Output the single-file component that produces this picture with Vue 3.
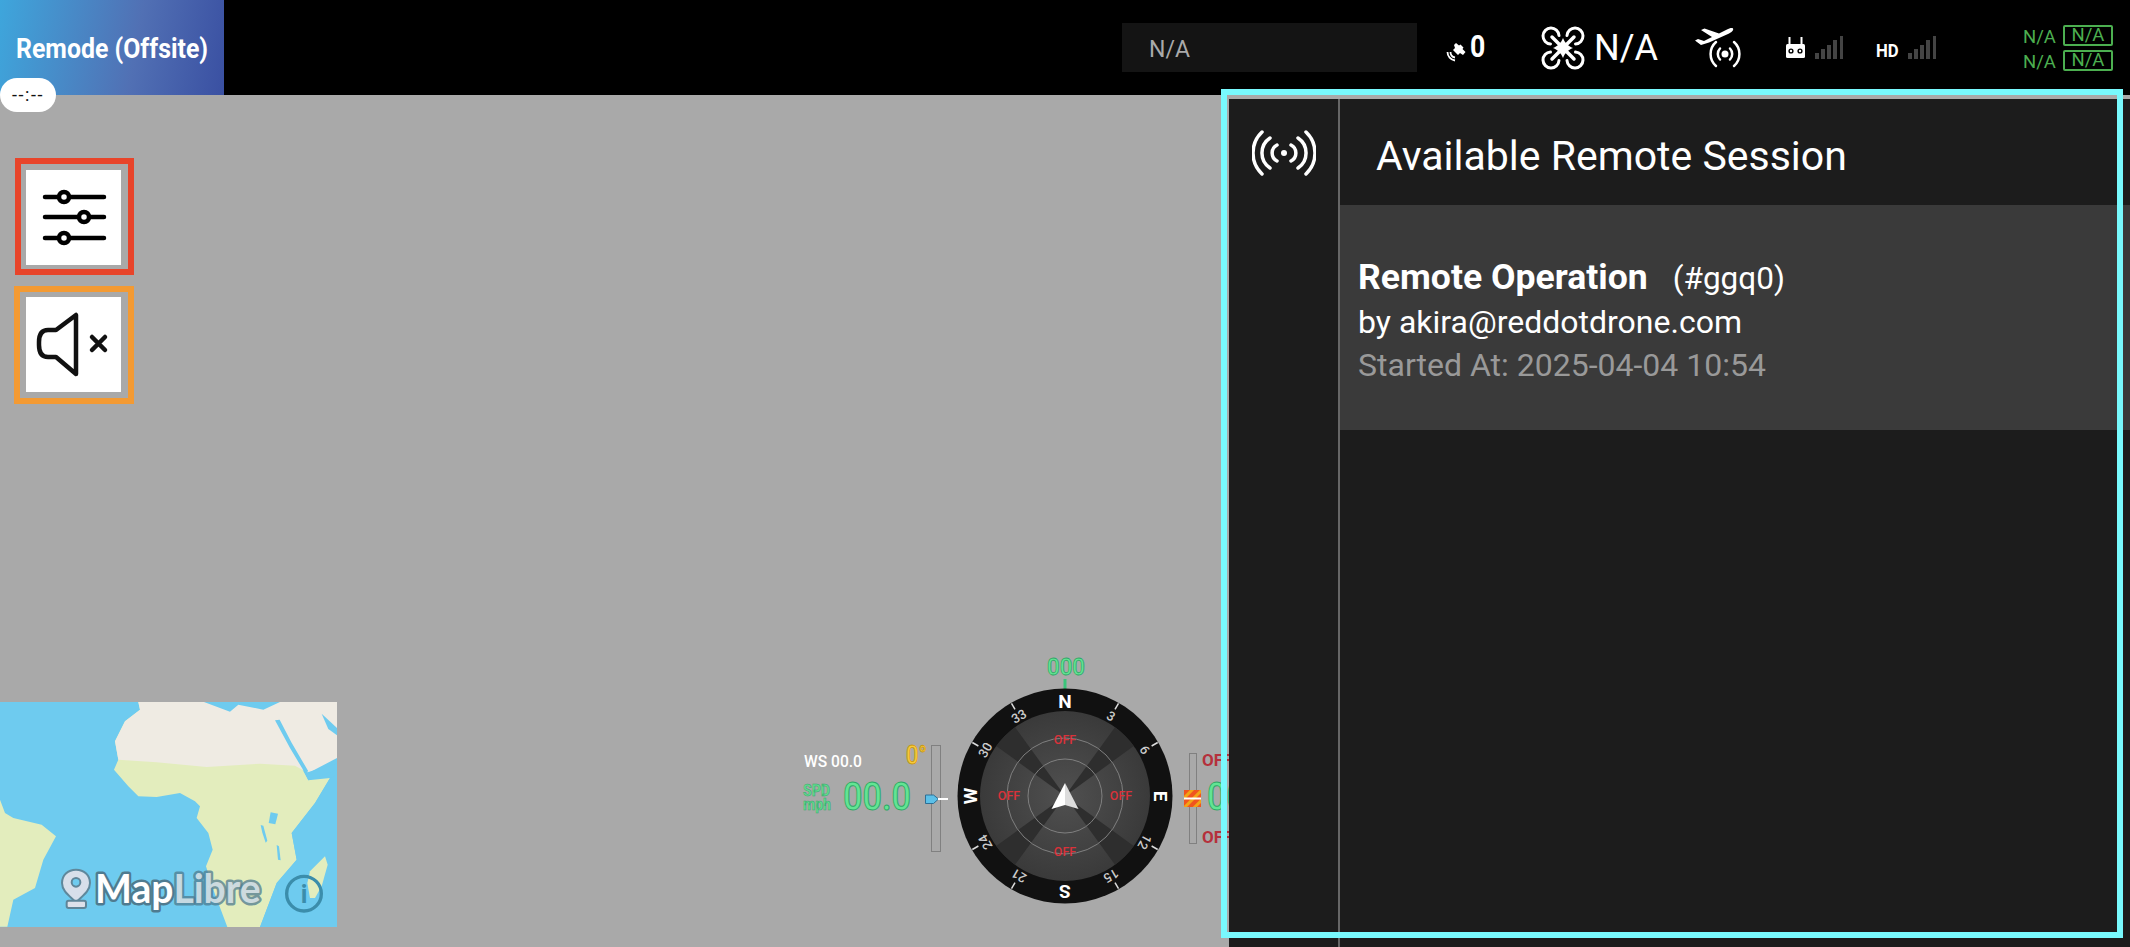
<script setup>
const cx = 1065
const cy = 796
const rad = (d) => ((d - 90) * Math.PI) / 180
const pt = (d, r) => ({ x: cx + Math.cos(rad(d)) * r, y: cy + Math.sin(rad(d)) * r })
const numbers = [30, 60, 120, 150, 210, 240, 300, 330].map((d) => {
  const a = pt(d, 107)
  const b = pt(d, 100)
  const t = pt(d, 92)
  return { d, label: String(d / 10), x1: a.x, y1: a.y, x2: b.x, y2: b.y, tx: t.x, ty: t.y }
})
const cardinals = [
  { d: 0, label: 'N' },
  { d: 90, label: 'E' },
  { d: 180, label: 'S' },
  { d: 270, label: 'W' }
].map((c) => ({ ...c, ...pt(c.d, 95) }))
const wedge = (d, w, r) => {
  const a = pt(d - w, r)
  const b = pt(d + w, r)
  return `M${cx} ${cy} L${a.x} ${a.y} A${r} ${r} 0 0 1 ${b.x} ${b.y} Z`
}
const wedges = [45, 135, 225, 315].map((d) => wedge(d, 9, 85))
const offs = [
  { x: 1065, y: 744 },
  { x: 1065, y: 856 },
  { x: 1121, y: 800 },
  { x: 1009, y: 800 }
]
const bars = [0, 1, 2, 3, 4]
</script>

<template>
  <div class="screen">
    <header class="topbar">
      <div class="brand"><span>Remode (Offsite)</span></div>
      <div class="status-box">N/A</div>
      <div class="sat">
        <svg width="20" height="20" viewBox="0 0 20 20">
          <path d="M10 1l3 2.500 1.500-1 3 3-1 1.500 3 3-2.500 3-3-2-2 2-5-5 2-2-1-3z" fill="#fff" />
          <path d="M1.500 10a8.500 8.500 0 0 0 7.500 8.500M4.500 10a5.500 5.500 0 0 0 4.500 5.500" fill="none" stroke="#fff" stroke-width="1.800" />
        </svg>
        <span>0</span>
      </div>
      <div class="drone">
        <svg width="44" height="44" viewBox="0 0 44 44" fill="none" stroke="#fff" stroke-width="3" stroke-linecap="round">
          <path d="M18 9.500A8 8 0 1 0 9.500 18M26 9.500A8 8 0 1 1 34.500 18M18 34.500A8 8 0 1 1 9.500 26M26 34.500A8 8 0 1 0 34.500 26" />
          <path d="M11 11l22 22M33 11L11 33" stroke-width="3.500" />
          <path d="M22 12c2 5 5 8 10 10-5 2-8 5-10 10-2-5-5-8-10-10 5-2 8-5 10-10z" fill="#fff" stroke="none" />
        </svg>
        <span>N/A</span>
      </div>
      <svg class="plane" width="48" height="41" viewBox="0 0 48 41">
        <path d="M38 1.500c1 2-2 4-5 5.500L14 15.500 6 18 0 13.500 3 12l6 2 8-4L6 3l3.500-1.500L24 6.500l8-4c2-1 5-2 6-1z" fill="#fff" />
        <circle cx="30" cy="27" r="3.500" fill="#fff" />
        <path d="M25 21.500a8 8 0 0 0 0 11M35 21.500a8 8 0 0 1 0 11M21 15a16 16 0 0 0 0 24M39 15a16 16 0 0 1 0 24" fill="none" stroke="#fff" stroke-width="2.500" stroke-linecap="round" />
      </svg>
      <svg class="rc" width="19" height="21" viewBox="0 0 19 21">
        <path d="M3.500 0v7M15.500 0v7" stroke="#fff" stroke-width="2" />
        <rect x="0" y="7" width="19" height="14" rx="1.500" fill="#fff" />
        <circle cx="5" cy="14" r="2.600" fill="#000" />
        <circle cx="14" cy="14" r="2.600" fill="#000" />
        <circle cx="5" cy="14" r="1.200" fill="#fff" />
        <circle cx="14" cy="14" r="1.200" fill="#fff" />
      </svg>
      <div class="bars">
        <i v-for="b in bars" :key="b" :style="{ height: 6 + b * 4.200 + 'px' }"></i>
      </div>
      <span class="hd">HD</span>
      <div class="bars bars-hd">
        <i v-for="b in bars" :key="b" :style="{ height: 6 + b * 4.200 + 'px' }"></i>
      </div>
      <div class="readouts">
        <div class="readout"><span>N/A</span><b>N/A</b></div>
        <div class="readout"><span>N/A</span><b>N/A</b></div>
      </div>
    </header>

    <div class="time-pill">--:--</div>

    <main class="body">
      <section class="mapview">
        <div class="tools">
          <div class="tool tool-red">
            <button class="tool-btn" aria-label="Settings">
              <svg width="95" height="95" viewBox="0 0 95 95" fill="none" stroke="#000" stroke-width="4.500" stroke-linecap="round">
                <path d="M19 27h59M19 47h59M19 68h59" />
                <circle cx="38" cy="27" r="5" fill="#fff" />
                <circle cx="58" cy="47" r="5" fill="#fff" />
                <circle cx="38" cy="68" r="5" fill="#fff" />
              </svg>
            </button>
          </div>
          <div class="tool tool-orange">
            <button class="tool-btn" aria-label="Muted">
              <svg width="95" height="95" viewBox="0 0 95 95" fill="none" stroke="#111" stroke-linecap="round" stroke-linejoin="round">
                <path d="M50 18v59L30 60H22q-9 0-9-12v-3q0-12 9-12h8z" stroke-width="4.500" />
                <path d="M66 40l13 13M79 40L66 53" stroke-width="4.500" />
              </svg>
            </button>
          </div>
        </div>

        <svg class="minimap" width="337" height="225" viewBox="0 37 1011 675">
          <rect x="0" y="37" width="1011" height="675" fill="#6ecbef" />
          <path d="M0 330L15 370 40 385 125 405 168 440 130 510 105 595 40 630 22 711H0z" fill="#e3edbd" />
          <path d="M415 37L420 60 375 95 345 155 355 210 342 240 385 290 415 320 470 322 540 310 585 335 600 350 590 385 625 430 638 480 618 530 640 600 682 712H780L830 580 890 510 875 430 945 340 990 265 925 272 905 235 885 225 825 90 850 37z" fill="#e3edbd" />
          <path d="M415 37L420 60 375 95 345 155 355 210 470 218 620 232 780 222 885 228 925 250 1011 205V37z" fill="#efebe3" />
          <path d="M612 37L690 66 715 45 790 60 840 37z" fill="#6ecbef" />
          <path d="M965 72L1011 115V137L985 118z" fill="#6ecbef" />
          <path d="M825 92L839 90 874 158 925 245 915 250 870 175z" fill="#6ecbef" />
          <path d="M915 250L1011 222V240L925 272z" fill="#6ecbef" />
          <path d="M990 265L1011 255V712H780L830 580 890 510 875 430 945 340z" fill="#6ecbef" />
          <path d="M812 368L834 372 826 404 806 400z" fill="#6ecbef" />
          <path d="M782 406L790 408 802 453 797 459 787 429z" fill="#6ecbef" />
          <path d="M830 466L837 470 842 512 834 510z" fill="#6ecbef" />
          <path d="M975 500L983 525 965 590 945 625 930 625 922 580 930 545z" fill="#e3edbd" />
          <path d="M228 540c-25 0-42 18-42 40 0 25 25 40 42 58 17-18 42-33 42-58 0-22-17-40-42-40z" fill="#dde1ea" stroke="#5f8598" stroke-width="6" opacity=".95" />
          <circle cx="228" cy="578" r="13" fill="#6ecbef" stroke="#5f8598" stroke-width="6" />
          <rect x="200" y="633" width="58" height="22" rx="6" fill="#dde1ea" stroke="#5f8598" stroke-width="6" />
          <text class="ml-text" x="285" y="640" textLength="497" lengthAdjust="spacingAndGlyphs">Map<tspan class="ml-fade">Libre</tspan></text>
          <circle cx="912" cy="612" r="52" fill="none" stroke="#3b8dab" stroke-width="10" />
          <text class="ml-info" x="912" y="640">i</text>
        </svg>

        <svg class="hud" width="439" height="307" viewBox="790 640 439 307">
          <text class="ws" x="804" y="767" textLength="58" lengthAdjust="spacingAndGlyphs">WS 00.0</text>
          <text class="spd-s" x="803" y="796" textLength="27" lengthAdjust="spacingAndGlyphs">SPD</text>
          <text class="spd-s" x="803" y="810" textLength="28" lengthAdjust="spacingAndGlyphs">mph</text>
          <text class="big" x="843" y="810" textLength="68" lengthAdjust="spacingAndGlyphs">00.0</text>
          <text class="deg" x="906" y="764" textLength="21" lengthAdjust="spacingAndGlyphs">0°</text>
          <rect x="931.500" y="745.500" width="9" height="106" fill="#a9a9a9" stroke="#808080" />
          <path d="M925.500 795h8l5 4-5 4.500h-8z" fill="#5cc0e8" stroke="#2d6f95" stroke-width="1" />
          <path d="M938 799h10" stroke="#fff" stroke-width="2" />

          <path d="M1065 679v10" stroke="#39c47a" stroke-width="3" />
          <text class="top-hdg" x="1066" y="675" textLength="38" lengthAdjust="spacingAndGlyphs">000</text>

          <defs>
            <radialGradient id="dial" cx="50%" cy="50%" r="50%">
              <stop offset="0" stop-color="#505050" />
              <stop offset="1" stop-color="#3a3a3a" />
            </radialGradient>
            <pattern id="hatch" width="7" height="7" patternUnits="userSpaceOnUse" patternTransform="rotate(45)">
              <rect width="7" height="7" fill="#f0541e" />
              <rect width="3" height="7" fill="#f2a516" />
            </pattern>
          </defs>
          <circle :cx="cx" :cy="cy" r="107.500" fill="#111" />
          <circle :cx="cx" :cy="cy" r="85" fill="url(#dial)" />
          <path v-for="(w, i) in wedges" :key="i" :d="w" fill="#2e2e2e" />
          <circle :cx="cx" :cy="cy" r="58" fill="none" stroke="#808080" stroke-width="1" />
          <circle :cx="cx" :cy="cy" r="37" fill="none" stroke="#808080" stroke-width="1" />
          <g v-for="n in numbers" :key="n.d">
            <line :x1="n.x1" :y1="n.y1" :x2="n.x2" :y2="n.y2" stroke="#ddd" stroke-width="1.500" />
            <text class="num" :x="n.tx" :y="n.ty" :transform="`rotate(${n.d} ${n.tx} ${n.ty})`">{{ n.label }}</text>
          </g>
          <text
            v-for="c in cardinals"
            :key="c.label"
            class="card"
            :x="c.x"
            :y="c.y"
            :transform="`rotate(${c.d} ${c.x} ${c.y})`"
          >{{ c.label }}</text>
          <text v-for="(o, i) in offs" :key="i" class="off" :x="o.x" :y="o.y">OFF</text>
          <path d="M1065 783l-13.500 26 13.500-4z" fill="#fff" />
          <path d="M1065 783l13.500 26-13.500-4z" fill="#dcdcdc" />

          <rect x="1189.500" y="753.500" width="7" height="90" fill="#a9a9a9" stroke="#808080" />
          <rect x="1184" y="790" width="17" height="17" fill="url(#hatch)" />
          <path d="M1184 798.500h17" stroke="#fff" stroke-width="2" />
          <text class="off-side" x="1202" y="766">OFF</text>
          <text class="off-side" x="1202" y="843">OFF</text>
          <text class="big" x="1207" y="810" textLength="68" lengthAdjust="spacingAndGlyphs">00.0</text>
        </svg>
      </section>

      <aside class="panel">
        <nav class="rail">
          <svg width="64" height="46" viewBox="0 0 64 46" fill="none" stroke="#fff" stroke-width="3.500" stroke-linecap="round">
            <circle cx="32" cy="23" r="3" fill="#fff" stroke="none" />
            <path d="M25 15a9 9 0 0 0 0 16M39 15a9 9 0 0 1 0 16M18 8a18 18 0 0 0 0 30M46 8a18 18 0 0 1 0 30M10 2a29 29 0 0 0 0 42M54 2a29 29 0 0 1 0 42" />
          </svg>
        </nav>
        <div class="content">
          <h1 class="title">Available Remote Session</h1>
          <div class="session">
            <div class="session-name"><strong>Remote Operation</strong><span>(#ggq0)</span></div>
            <div class="session-by">by akira@reddotdrone.com</div>
            <div class="session-at">Started At: 2025-04-04 10:54</div>
          </div>
        </div>
      </aside>
    </main>

    <div class="highlight" aria-hidden="true"></div>
  </div>
</template>

<style>
html, body { margin: 0; background: #a9a9a9; }
</style>

<style scoped>
.screen {
  position: relative;
  width: 2130px;
  height: 947px;
  overflow: hidden;
  display: flex;
  flex-direction: column;
  font-family: Roboto, "Liberation Sans", sans-serif;
  background: #a9a9a9;
}
.topbar {
  height: 95px;
  flex: none;
  display: flex;
  align-items: center;
  background: #000;
  color: #fff;
}
.brand {
  width: 224px;
  height: 95px;
  padding: 32px 0 0 16px;
  box-sizing: border-box;
  background: linear-gradient(100deg, #3ea6dc 0%, #5170b4 60%, #3a50a2 100%);
  font-size: 28px;
  font-weight: 700;
  line-height: 33px;
  white-space: nowrap;
}
.brand span {
  display: inline-block;
  transform: scaleX(.888);
  transform-origin: left;
}
.status-box {
  margin-left: 898px;
  width: 295px;
  height: 49px;
  padding-left: 27px;
  box-sizing: border-box;
  background: #141414;
  color: #aaa;
  font-size: 23px;
  line-height: 53px;
}
.sat {
  margin-left: 29px;
  display: flex;
  align-items: flex-end;
  gap: 4px;
  font-size: 31px;
  font-weight: 700;
  line-height: 30px;
}
.sat svg { margin-bottom: 1px; }
.sat span {
  display: inline-block;
  transform: scaleX(.86);
  transform-origin: left;
  width: 15px;
  margin-bottom: 1px;
}
.drone {
  margin-left: 56px;
  display: flex;
  align-items: center;
  gap: 9px;
  font-size: 36px;
  line-height: 44px;
}
.plane { margin-left: 37px; margin-top: -1px; flex: none; }
.rc { margin-left: 43px; flex: none; }
.bars {
  margin-left: 10px;
  width: 28px;
  height: 23px;
  display: flex;
  align-items: flex-end;
  justify-content: space-between;
}
.bars i { display: block; width: 3.500px; background: #444; }
.hd {
  margin-left: 33px;
  font-size: 19px;
  font-weight: 700;
  width: 23px;
  white-space: nowrap;
  transform: scaleX(.88);
  transform-origin: left;
  margin-top: 6px;
}
.bars-hd { margin-left: 9px; }
.readouts {
  margin-left: 87px;
  display: flex;
  flex-direction: column;
  gap: 4px;
}
.readout {
  display: flex;
  align-items: center;
  gap: 7px;
  height: 21px;
  color: #4caf50;
  font-size: 18.500px;
  font-weight: 400;
}
.readout span { padding-top: 3px; }
.readout b {
  width: 50px;
  height: 21px;
  box-sizing: border-box;
  border: 2px solid #4caf50;
  border-radius: 2px;
  text-align: center;
  font-weight: 400;
  line-height: 17px;
}
.time-pill {
  position: absolute;
  left: 0;
  top: 78px;
  width: 56px;
  height: 34px;
  border-radius: 17px;
  background: #fff;
  color: #111;
  text-align: center;
  font-size: 18px;
  letter-spacing: 1.500px;
  line-height: 34px;
}
.body {
  flex: 1;
  min-height: 0;
  display: flex;
}
.mapview {
  position: relative;
  flex: 1;
  min-width: 0;
  overflow: hidden;
}
.tools {
  display: flex;
  flex-direction: column;
  align-items: flex-start;
  gap: 11px;
  padding: 63px 0 0 14px;
}
.tool { border: 6px solid; line-height: 0; }
.tool-red { margin-left: 1px; border-color: #e8442a; padding: 6px 7px 4px 5px; }
.tool-orange { border-color: #f39a33; padding: 5px 7px 6px 6px; }
.tool-btn {
  display: block;
  width: 95px;
  height: 95px;
  padding: 0;
  border: 0;
  background: #fff;
}
.minimap {
  position: absolute;
  left: 0;
  bottom: 20px;
}
.ml-text {
  font-family: Lato, sans-serif;
  font-size: 122px;
  font-weight: 700;
  fill: #fff;
  stroke: #4f7b90;
  stroke-width: 15px;
  stroke-linejoin: round;
  paint-order: stroke;
}
.ml-fade { fill: #e6eef2; fill-opacity: .8; stroke-opacity: .75; }
.ml-info {
  font-family: Roboto, sans-serif;
  font-size: 76px;
  font-weight: 700;
  fill: #3b8dab;
  text-anchor: middle;
}
.hud {
  position: absolute;
  left: 790px;
  top: 545px;
}
.hud text { font-family: Roboto, sans-serif; }
.ws { font-size: 17px; font-weight: 500; fill: #fff; }
.spd-s {
  font-size: 16px;
  font-weight: 700;
  fill: #62db8f;
  stroke: #35a86b;
  stroke-width: .5px;
}
.big {
  font-size: 39px;
  font-weight: 500;
  fill: #62e493;
  stroke: #2ea766;
  stroke-width: 1px;
}
.deg {
  font-size: 26px;
  font-weight: 500;
  fill: #f7cb3c;
  stroke: #c9960d;
  stroke-width: .8px;
}
.top-hdg {
  font-size: 24px;
  font-weight: 500;
  text-anchor: middle;
  fill: #62e493;
  stroke: #2ea766;
  stroke-width: .8px;
}
.num {
  font-size: 13px;
  fill: #ccc;
  font-weight: 500;
  text-anchor: middle;
  dominant-baseline: central;
}
.card {
  font-size: 19px;
  font-weight: 700;
  fill: #fff;
  text-anchor: middle;
  dominant-baseline: central;
}
.off {
  font-size: 12.500px;
  font-weight: 500;
  fill: #d9323a;
  text-anchor: middle;
}
.off-side {
  font-size: 17px;
  font-weight: 700;
  fill: #b5303c;
}
.panel {
  position: relative;
  flex: none;
  width: 901px;
  margin-top: 4px;
  display: flex;
  background: #1c1c1c;
  color: #fff;
}
.rail {
  width: 111px;
  flex: none;
  box-sizing: border-box;
  border-right: 2px solid #666;
  padding: 31px 0 0 23px;
}
.rail svg { display: block; }
.content {
  flex: 1;
  min-width: 0;
}
.title {
  margin: 0;
  height: 106px;
  padding-left: 36px;
  font-size: 41px;
  font-weight: 400;
  line-height: 114px;
}
.session {
  height: 225px;
  box-sizing: border-box;
  padding: 50px 18px 0;
  background: #3a3a3a;
}
.session-name {
  display: flex;
  align-items: baseline;
  gap: 25px;
  font-size: 31.500px;
  line-height: 45px;
}
.session-name strong { font-size: 35.600px; font-weight: 700; }
.session-by { font-size: 32px; line-height: 43px; }
.session-at { font-size: 32px; line-height: 42px; color: #999; }
.highlight {
  position: absolute;
  left: 1221px;
  top: 89px;
  width: 902px;
  height: 849px;
  box-sizing: border-box;
  border: 6px solid #78f9fd;
  pointer-events: none;
}
</style>
